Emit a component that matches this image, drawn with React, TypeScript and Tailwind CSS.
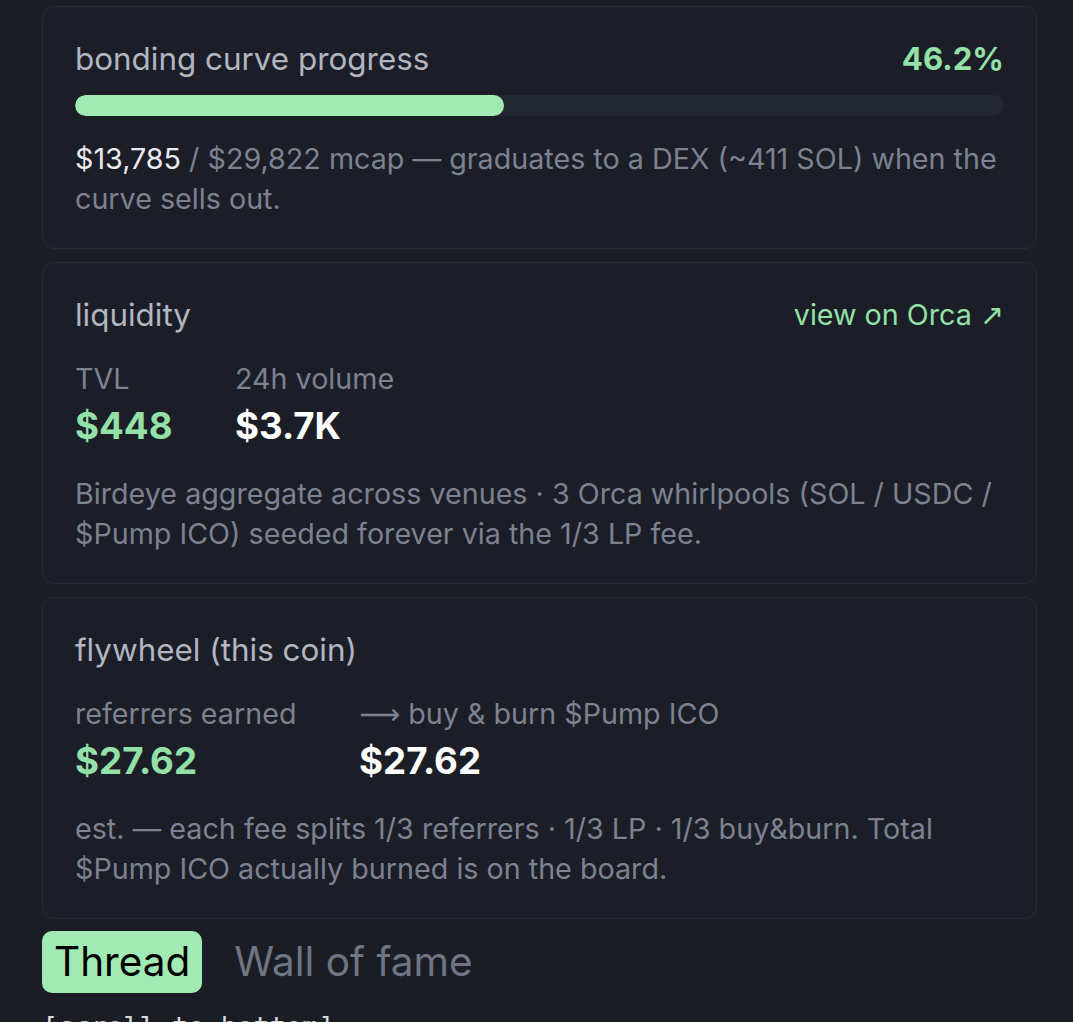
import React from "react";

const GREEN = "text-[#93e1a8]";

function Card({ children, className = "" }: { children: React.ReactNode; className?: string }) {
  return (
    <section
      className={`rounded-[12px] border border-[#252a34] bg-[#1b1e26] px-[32px] pt-[30px] pb-[29px] ${className}`}
    >
      {children}
    </section>
  );
}

function Stat({ label, value, green, width }: { label: React.ReactNode; value: string; green?: boolean; width: string }) {
  return (
    <div className={`flex flex-col ${width}`}>
      <span className="text-[28.7px] leading-[40px] text-[#7c828f]">{label}</span>
      <span className={`mt-[3px] text-[36.7px] font-bold leading-[48px] ${green ? GREEN : "text-white"}`}>{value}</span>
    </div>
  );
}

export default function App() {
  const progress = 46.2;

  return (
    <div
      className="min-h-[1022px] bg-[#1a1d24] pl-[42px] pr-[36px] pt-[6px]"
      style={{ fontFamily: "Inter, 'Noto Sans', sans-serif" }}
    >
      <div className="flex flex-col gap-[13px]">
        <Card>
          <div className="flex items-center justify-between">
            <h2 className="text-[31.4px] leading-[44px] text-[#b1b6c0]">bonding curve progress</h2>
            <span className={`text-[31.2px] font-bold leading-[44px] ${GREEN}`}>{progress}%</span>
          </div>
          <div className="mt-[14px] h-[21px] w-full overflow-hidden rounded-full bg-[#232833]">
            <div className="h-full rounded-full bg-[#a2eab3]" style={{ width: `${progress}%` }} />
          </div>
          <p className="mt-[23px] text-[28.7px] leading-[40px] text-[#7c828f]">
            <span className="text-[#e8eaee]">$13,785</span> / $29,822 mcap — graduates to a DEX (~411 SOL) when the
            curve sells out.
          </p>
        </Card>

        <Card>
          <div className="flex items-center justify-between">
            <h2 className="text-[31.4px] leading-[44px] text-[#b1b6c0]">liquidity</h2>
            <a className={`text-[28.7px] leading-[44px] ${GREEN}`}>
              view on Orca <span style={{ fontFamily: "'DejaVu Sans', sans-serif" }}>↗</span>
            </a>
          </div>
          <div className="mt-[22px] flex">
            <Stat label="TVL" value="$448" green width="w-[160px]" />
            <Stat label="24h volume" value="$3.7K" width="w-auto" />
          </div>
          <p className="mt-[24px] text-[28.7px] leading-[40px] text-[#7c828f]">
            Birdeye aggregate across venues · 3 Orca whirlpools (SOL / USDC / $Pump ICO) seeded forever via the 1/3 LP
            fee.
          </p>
        </Card>

        <Card>
          <h2 className="text-[31.4px] leading-[44px] text-[#b1b6c0]">flywheel (this coin)</h2>
          <div className="mt-[22px] flex">
            <Stat label="referrers earned" value="$27.62" green width="w-[284px]" />
            <Stat
              label={
                <>
                  <span style={{ fontFamily: "'DejaVu Sans', sans-serif" }}>⟶</span> buy &amp; burn $Pump ICO
                </>
              }
              value="$27.62"
              width="w-auto"
            />
          </div>
          <p className="mt-[24px] text-[28.7px] leading-[40px] text-[#7c828f]">
            est. — each fee splits 1/3 referrers · 1/3 LP · 1/3 buy&amp;burn. Total $Pump ICO actually burned is on the
            board.
          </p>
        </Card>
      </div>

      <div className="mt-[12px] flex items-center gap-[32px]">
        <button className="rounded-[10px] bg-[#a2eab3] px-[12px] py-[4px] text-[40.5px] leading-[54px] text-black">
          Thread
        </button>
        <button className="text-[40.5px] leading-[54px] text-[#6f7582]">Wall of fame</button>
      </div>
      <div
        className="mt-[14px] text-[27px] leading-[40px] text-[#d6d9df]"
        style={{ fontFamily: "'DejaVu Sans Mono', 'Liberation Mono', monospace" }}
      >
        [scroll to bottom]
      </div>
    </div>
  );
}
